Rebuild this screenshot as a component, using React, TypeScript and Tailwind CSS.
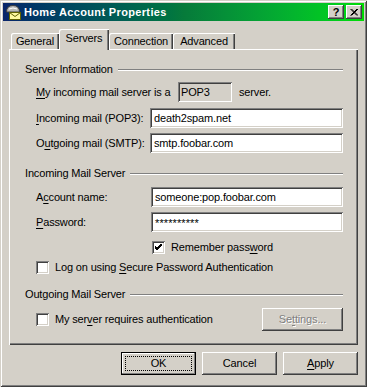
import React from "react";

const raised =
  "shadow-[inset_-1px_-1px_0_#404040,inset_1px_1px_0_#ffffff,inset_-2px_-2px_0_#808080,inset_2px_2px_0_#d4d0c8]";
const sunken =
  "shadow-[inset_1px_1px_0_#808080,inset_-1px_-1px_0_#ffffff,inset_2px_2px_0_#404040,inset_-2px_-2px_0_#d4d0c8]";

const U = ({ children }: { children: React.ReactNode }) => (
  <span className="underline underline-offset-[2px]">{children}</span>
);

const GroupHeader = ({ title }: { title: string }) => (
  <div className="flex items-center h-[13px] gap-[5px]">
    <span className="whitespace-nowrap">{title}</span>
    <div className="flex-1 h-[2px] border-t border-t-[#808080] border-b border-b-white" />
  </div>
);

const TextBox = ({ value, small }: { value: string; small?: boolean }) => (
  <div className={`flex-1 h-[20px] bg-white flex items-center pl-[4px] ${sunken}`}>
    <span className={small ? "text-[11px] tracking-[0.1px] pt-[2px]" : ""}>{value}</span>
  </div>
);

const Checkbox = ({ checked }: { checked?: boolean }) => (
  <div className={`w-[13px] h-[13px] bg-white flex items-center justify-center shrink-0 ${sunken}`}>
    {checked && (
      <svg width="7" height="7" viewBox="0 0 7 7">
        <path d="M0 2 L2 4 L7 -1 M0 3 L2 5 L7 0 M0 4 L2 6 L7 1" stroke="#000" strokeWidth="1" fill="none" />
      </svg>
    )}
  </div>
);

const Tab = ({ label, width, selected }: { label: string; width: string; selected?: boolean }) => (
  <div
    className={`${width} flex items-center justify-center bg-[#d4d0c8] rounded-tl-[2px] shadow-[inset_1px_1px_0_#ffffff,inset_-1px_0_0_#404040,inset_-2px_0_0_#808080] ${
      selected ? "h-[21px] -mb-[1px] relative z-10 pb-[3px]" : "h-[16px]"
    }`}
  >
    {label}
  </div>
);

const Button = ({ children, className = "" }: { children: React.ReactNode; className?: string }) => (
  <div className={`w-[75px] h-[23px] flex items-center justify-center bg-[#d4d0c8] ${raised} ${className}`}>
    {children}
  </div>
);

export default function App() {
  return (
    <div className="w-[367px] h-[387px] bg-[#d4d0c8] p-[3px] flex flex-col font-['Liberation_Sans',Arial,sans-serif] text-[11px] tracking-[-0.15px] text-black leading-[13px] shadow-[inset_1px_1px_0_#d4d0c8,inset_-1px_-1px_0_#404040,inset_2px_2px_0_#ffffff,inset_-2px_-2px_0_#808080]">
      {/* Title bar */}
      <div className="h-[18px] flex items-center pl-[2px] pr-[2px] bg-linear-to-r from-[#0a246a] via-[#067a3a] to-[#00dc00]">
        <svg width="16" height="16" viewBox="0 0 16 16" className="shrink-0">
          <path d="M1.5 8 Q1.5 1.5 8 1.5 Q14.5 1.5 14.5 8 Z" fill="#b8b8b8" stroke="#404040" strokeWidth="1" />
          <path d="M4 5 Q8 3 12 5" stroke="#fff" strokeWidth="1" fill="none" />
          <rect x="4.5" y="8.5" width="11" height="7" fill="#fff8a0" stroke="#606000" />
          <path d="M4.5 8.5 L10 12.5 L15.5 8.5" stroke="#606000" fill="none" />
        </svg>
        <span className="ml-[3px] text-white font-bold text-[11px] tracking-[0.35px]">Home Account Properties</span>
        <div className="ml-auto flex gap-[2px]">
          <div className={`w-[16px] h-[14px] bg-[#d4d0c8] flex items-center justify-center font-bold text-[11px] ${raised}`}>
            ?
          </div>
          <div className={`w-[16px] h-[14px] bg-[#d4d0c8] flex items-center justify-center ${raised}`}>
            <svg width="8" height="7" viewBox="0 0 8 7">
              <path d="M0.5 0 L7 6.5 M1.5 0 L8 6.5 M7 0 L0.5 6.5 M8 0 L1.5 6.5" stroke="#000" strokeWidth="1" />
            </svg>
          </div>
        </div>
      </div>

      <div className="px-[6px] pt-[8px] flex flex-col">
        {/* Tabs */}
        <div className="h-[20px] flex items-end pl-[2px]">
          <Tab label="General" width="w-[48px]" />
          <Tab label="Servers" width="w-[50px]" selected />
          <Tab label="Connection" width="w-[64px]" />
          <Tab label="Advanced" width="w-[62px]" />
        </div>

        {/* Panel */}
        <div className="w-[349px] h-[296px] pl-[16px] pr-[15px] pt-[14px] flex flex-col shadow-[inset_1px_1px_0_#ffffff,inset_-1px_-1px_0_#404040,inset_-2px_-2px_0_#808080]">
          <GroupHeader title="Server Information" />
          <div className="pl-[11px] flex flex-col">
            <div className="mt-[6px] h-[20px] flex items-center">
              <span className="w-[142px]">
                <U>M</U>y incoming mail server is a
              </span>
              <div className={`w-[54px] h-[20px] flex items-center pl-[3px] bg-[#d4d0c8] ${sunken}`}>POP3</div>
              <span className="ml-[7px]">server.</span>
            </div>
            <div className="mt-[6px] flex items-center">
              <span className="w-[114px]">
                <U>I</U>ncoming mail (POP3):
              </span>
              <TextBox value="death2spam.net" />
            </div>
            <div className="mt-[5px] flex items-center">
              <span className="w-[114px]">
                O<U>u</U>tgoing mail (SMTP):
              </span>
              <TextBox value="smtp.foobar.com" />
            </div>
          </div>

          <div className="mt-[14px]">
            <GroupHeader title="Incoming Mail Server" />
          </div>
          <div className="pl-[11px] flex flex-col">
            <div className="mt-[7px] flex items-center">
              <span className="w-[115px]">
                A<U>c</U>count name:
              </span>
              <TextBox value="someone:pop.foobar.com" />
            </div>
            <div className="mt-[5px] flex items-center">
              <span className="w-[115px]">
                <U>P</U>assword:
              </span>
              <TextBox value="**********" small />
            </div>
            <div className="mt-[9px] flex items-center pl-[116px]">
              <Checkbox checked />
              <span className="ml-[6px]">
                Remember pass<U>w</U>ord
              </span>
            </div>
            <div className="mt-[7px] flex items-center">
              <Checkbox />
              <span className="ml-[6px]">
                Log on using <U>S</U>ecure Password Authentication
              </span>
            </div>
          </div>

          <div className="mt-[14px]">
            <GroupHeader title="Outgoing Mail Server" />
          </div>
          <div className="pl-[11px] mt-[7px] flex items-center">
            <Checkbox />
            <span className="ml-[6px]">
              My ser<U>v</U>er requires authentication
            </span>
            <Button className="ml-auto w-[81px] text-[#808080] [text-shadow:1px_1px_0_#ffffff]">
              <span>
                Se<U>t</U>tings...
              </span>
            </Button>
          </div>
        </div>

        {/* Dialog buttons */}
        <div className="mt-[7px] w-[349px] flex justify-end gap-[6px]">
          <div className="w-[75px] h-[23px] border border-black">
            <div className="w-full h-full flex items-center justify-center bg-[#d4d0c8] shadow-[inset_-1px_-1px_0_#808080,inset_1px_1px_0_#ffffff] p-[3px]">
              <div className="w-full h-full border border-dotted border-black flex items-center justify-center">OK</div>
            </div>
          </div>
          <Button>Cancel</Button>
          <Button>
            <span>
              <U>A</U>pply
            </span>
          </Button>
        </div>
      </div>
    </div>
  );
}
